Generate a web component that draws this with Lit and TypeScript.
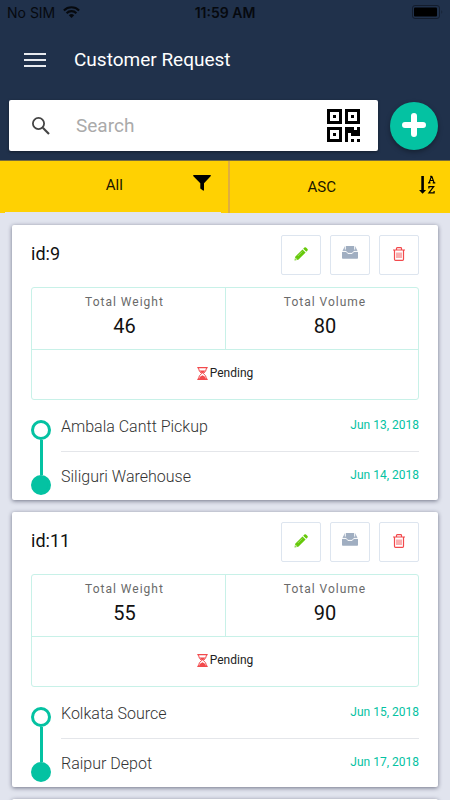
import { LitElement, html, css, svg } from "lit";
import { customElement, property } from "lit/decorators.js";

interface Stop {
  name: string;
  date: string;
}

interface CustomerRequest {
  id: number;
  weight: number;
  volume: number;
  status: string;
  stops: Stop[];
}

const requests: CustomerRequest[] = [
  {
    id: 9,
    weight: 46,
    volume: 80,
    status: "Pending",
    stops: [
      { name: "Ambala Cantt Pickup", date: "Jun 13, 2018" },
      { name: "Siliguri Warehouse", date: "Jun 14, 2018" },
    ],
  },
  {
    id: 11,
    weight: 55,
    volume: 90,
    status: "Pending",
    stops: [
      { name: "Kolkata Source", date: "Jun 15, 2018" },
      { name: "Raipur Depot", date: "Jun 17, 2018" },
    ],
  },
];

const icon = (width: number, height: number, body: unknown) => html`
  <svg width=${width} height=${height} viewBox="0 0 ${width} ${height}" aria-hidden="true">${body}</svg>
`;

const wifi = icon(17, 12, svg`
  <g fill="none" stroke="#000" stroke-width="2.1">
    <path d="M.9 4.4a10.7 10.7 0 0 1 15.2 0" />
    <path d="M3.6 7.2a6.9 6.9 0 0 1 9.8 0" />
  </g>
  <path d="M8.5 12 5.8 9.3a3.8 3.8 0 0 1 5.4 0z" />
`);

const battery = icon(31, 14, svg`
  <rect x=".5" y=".5" width="27" height="13" rx="2.5" fill="none" stroke="#141d2d" />
  <rect x="2" y="2.500" width="23" height="9" rx="1" />
  <path d="M29.500 5q1.500 2 0 4z" fill="#141d2d" />
`);

const menu = icon(22, 14, svg`<path d="M0 1h22M0 7h22M0 13h22" stroke="#e8eaee" stroke-width="2" />`);

const magnifier = icon(18, 18, svg`
  <circle cx="6.500" cy="6.500" r="5.600" fill="none" stroke="#444" stroke-width="1.800" />
  <path d="m10.800 10.800 6.200 6.200" stroke="#444" stroke-width="2.100" />
`);

const qr = icon(33, 33, svg`
  <path fill-rule="evenodd" d="M0 0h15v15H0zM3 3v9h9V3zM18 0h15v15H18zM21 3v9h9V3zM0 18h15v15H0zM3 21v9h9v-9z" />
  <path d="M6 6h3v3H6zM24 6h3v3h-3zM6 24h3v3H6zM18 18h9v3h3v-3h3v9h-9v-3h-3v9h-3zM24 30h3v3h-3zM30 30h3v3h-3z" />
`);

const plus = icon(24, 24, svg`<path d="M12 3v18M3 12h18" stroke="#fff" stroke-width="6" stroke-linecap="round" />`);

const funnel = icon(18, 16, svg`<path d="M.6 0h16.800q.9.400.2 1.200L11 8.200v6.900q-.2.800-1 .5l-2.700-2V8.200L.4 1.200Q-.2.400.6 0z" />`);

const sortAz = icon(17, 20, svg`
  <path d="M2.300 1h2.600v14h2.200L3.600 18.800 0 15h2.300z" />
  <g fill="none" stroke="#000" stroke-width="1.200">
    <path d="M10.200 7.600 12.300 1.500h.6L15 7.600M11 5.500h3.200M9 7.900h2.500M13.700 7.900h2.600M11.200 1.400h1.600" />
    <path d="M9.900 13.500v-1.900h4.800L9.900 17.900h5.200V16" />
  </g>
`);

const pencil = icon(14, 14, svg`
  <path fill="#66c90a" d="M9.200 1.700 10.400.5q.8-.7 1.600 0l1.500 1.500q.7.800 0 1.600l-1.200 1.200zM8.500 2.400l3.100 3.100-7.300 7.300L.5 13.500l.7-3.800z" />
  <path d="m3.800 9 4.500-4.500" fill="none" stroke="#b5e58a" stroke-width=".7" />
  <path d="M1.700 10.800v1.500h1.500" fill="none" stroke="#fff" stroke-width=".7" />
`);

const inbox = icon(16, 13, svg`
  <path fill="#a0aec1" d="M3.500 0h9q.6 0 .8.500L16 6v6q0 .8-.8.800H.8Q0 12.800 0 12V6L2.700.5q.2-.5.800-.5z" />
  <path d="M0 5.400h4.200l1.600 2h4.400l1.600-2H16M3.300 0v3.600M12.700 0v3.600" fill="none" stroke="#fff" stroke-width="1" />
`);

const trash = icon(12, 14, svg`
  <g fill="none" stroke="#f2494c">
    <path d="M0 3h12M3.500 3V1.500q0-.8.800-.8h3.400q.8 0 .8.800V3M1.500 3v9.200q0 1.200 1 1.200h7q1 0 1-1.200V3" stroke-width="1.200" />
    <path d="M4 5.500v5.500M6 5.500v5.500M8 5.500v5.500" stroke-width=".9" />
  </g>
`);

const hourglass = icon(11, 13, svg`
  <path d="M.3.700h10.400M.3 12.300h10.400" stroke="#f2494c" stroke-width="1.300" />
  <path d="M1.500 1q.2 3.800 3.200 5.500Q1.700 8.200 1.500 12M9.500 1q-.2 3.800-3.200 5.500 3 1.700 3.200 5.500" fill="none" stroke="#f2494c" />
  <path d="M2.700 3.500h5.600Q7.500 5.600 5.500 6.500 3.500 5.600 2.700 3.500zM2 12q.4-2.500 3.500-3.800Q8.600 9.500 9 12z" fill="#f2494c" />
`);

@customElement("request-card")
export class RequestCard extends LitElement {
  @property({ attribute: false }) request!: CustomerRequest;

  static styles = css`
    :host {
      display: block;
      padding: 10px 19px 5px;
      background: #fff;
      border-radius: 2px;
      box-shadow: 0 1px 4px rgba(20, 24, 50, 0.55);
    }
    .head {
      display: flex;
      align-items: center;
      justify-content: space-between;
    }
    .title {
      margin: 0;
      padding-bottom: 2px;
      font-size: 18px;
      font-weight: 400;
      line-height: 24px;
      color: #111;
    }
    .actions {
      display: flex;
      gap: 9px;
    }
    .action {
      display: grid;
      place-items: center;
      width: 40px;
      height: 40px;
      padding: 0 1px 2px 0;
      background: #fff;
      border: 1px solid #dde5ef;
      border-radius: 2px;
    }
    .action.raised {
      padding-bottom: 6px;
    }
    .summary {
      margin-top: 12px;
      border: 1px solid #c8f1e8;
      border-radius: 3px;
    }
    .totals {
      display: grid;
      grid-template-columns: 1fr 1fr;
      margin: 0;
      border-bottom: 1px solid #c8f1e8;
    }
    .total {
      padding: 5px 8px 8px 0;
      text-align: center;
    }
    .total + .total {
      padding: 5px 0 8px 6px;
      border-left: 1px solid #c8f1e8;
    }
    .label {
      font-size: 12px;
      line-height: 18px;
      letter-spacing: 1px;
      color: #6a6a6a;
    }
    .value {
      margin: 0;
      font-size: 20px;
      line-height: 30px;
      color: #111;
    }
    .status {
      display: flex;
      align-items: center;
      justify-content: center;
      gap: 2px;
      height: 46px;
      padding-bottom: 3px;
      font-size: 12px;
      color: #222;
    }
    .route {
      display: grid;
      grid-template-columns: 20px 1fr;
      column-gap: 10px;
      margin-top: 20px;
    }
    .track {
      display: flex;
      flex-direction: column;
      align-items: center;
      height: 75px;
    }
    .dot {
      box-sizing: border-box;
      width: 20px;
      height: 20px;
      border: 3px solid #04c2a2;
      border-radius: 50%;
    }
    .dot.filled {
      background: #04c2a2;
    }
    .line {
      flex: 1;
      width: 3px;
      background: #04c2a2;
    }
    .stops {
      margin: 0;
      padding: 0;
      list-style: none;
    }
    .stop {
      display: flex;
      align-items: flex-start;
      justify-content: space-between;
      font-size: 16px;
      font-weight: 300;
      line-height: 14px;
      color: #333;
    }
    .stop + .stop {
      margin-top: 17px;
      padding-top: 18px;
      border-top: 1px solid #e4e6ea;
    }
    .date {
      font-size: 12px;
      font-weight: 400;
      line-height: 10px;
      color: #04c2a2;
    }
    svg {
      display: block;
    }
  `;

  render() {
    const r = this.request;
    return html`
      <div class="head">
        <h2 class="title">id:${r.id}</h2>
        <div class="actions">
          <button class="action" aria-label="Edit">${pencil}</button>
          <button class="action raised" aria-label="Archive">${inbox}</button>
          <button class="action" aria-label="Delete">${trash}</button>
        </div>
      </div>
      <div class="summary">
        <dl class="totals">
          <div class="total">
            <dt class="label">Total Weight</dt>
            <dd class="value">${r.weight}</dd>
          </div>
          <div class="total">
            <dt class="label">Total Volume</dt>
            <dd class="value">${r.volume}</dd>
          </div>
        </dl>
        <div class="status">${hourglass}<span>${r.status}</span></div>
      </div>
      <div class="route">
        <div class="track"><span class="dot"></span><span class="line"></span><span class="dot filled"></span></div>
        <ul class="stops">
          ${r.stops.map((s) => html`<li class="stop"><span>${s.name}</span><time class="date">${s.date}</time></li>`)}
        </ul>
      </div>
    `;
  }
}

@customElement("app-root")
export class AppRoot extends LitElement {
  static styles = css`
    :host {
      display: block;
      height: 100vh;
      overflow: hidden;
      background: #e1e4ee;
      font-family: Roboto, "Liberation Sans", sans-serif;
    }
    button {
      font-family: inherit;
      border: 0;
      background: none;
    }
    svg {
      display: block;
    }
    .top {
      padding-bottom: 9px;
      background: #20314b;
      border-bottom: 1px solid #776c3b;
    }
    .device {
      display: grid;
      grid-template-columns: 1fr auto 1fr;
      align-items: center;
      height: 24px;
      padding: 0 7px;
      font-family: Inter, "Liberation Sans", sans-serif;
      font-size: 14px;
      color: #000;
    }
    .carrier {
      display: flex;
      align-items: center;
      gap: 8px;
      opacity: 0.8;
    }
    .clock {
      font-weight: 600;
      opacity: 0.8;
    }
    .battery {
      justify-self: end;
    }
    .bar {
      display: flex;
      align-items: center;
      gap: 28px;
      height: 72px;
      padding: 0 24px;
    }
    .menu {
      padding: 0;
    }
    .heading {
      margin: 0;
      font-size: 19px;
      font-weight: 400;
      line-height: 24px;
      color: #fff;
    }
    .tools {
      display: flex;
      align-items: center;
      gap: 12px;
      padding: 4px 12px 0 9px;
    }
    .search {
      flex: 1;
      display: flex;
      align-items: center;
      min-width: 0;
      height: 51px;
      padding: 0 18px 0 23px;
      box-sizing: border-box;
      background: #fff;
      border-radius: 2px;
      box-shadow: 0 1px 3px rgba(0, 0, 0, 0.4);
    }
    .field {
      flex: 1;
      min-width: 0;
      padding: 0 26px;
      border: 0;
      outline: 0;
      background: none;
      font-family: inherit;
      font-size: 19px;
      color: #333;
    }
    .field::placeholder {
      color: #aaa;
      opacity: 1;
    }
    .scan {
      padding: 0;
    }
    .add {
      display: grid;
      place-items: center;
      width: 48px;
      height: 48px;
      padding: 0 0 2px;
      border-radius: 50%;
      background: #04c2a2;
      box-shadow: 0 2px 5px rgba(0, 0, 0, 0.35);
    }
    .filters {
      display: grid;
      grid-template-columns: 51% 1fr;
      height: 52px;
      background: #ffd102;
    }
    .filter {
      position: relative;
      display: grid;
      grid-template-columns: 1fr auto;
      align-items: center;
      padding: 0 14px 0 0;
      font-size: 15px;
      color: #1a1600;
    }
    .filter:first-child {
      padding: 0 17px 4px 41px;
      border-right: 2px solid #dfae3f;
    }
    .filter:first-child::after {
      content: "";
      position: absolute;
      left: 5px;
      right: 7px;
      bottom: 0;
      height: 1px;
      background: #e1e4ee;
    }
    .filter .mark {
      padding: 0 0 4px 5px;
    }
    .list {
      display: grid;
      gap: 12px;
      padding: 12px;
    }
    .next {
      height: 275px;
      background: #fff;
      border-radius: 2px;
      box-shadow: 0 1px 4px rgba(20, 24, 50, 0.55);
    }
  `;

  render() {
    return html`
      <header class="top">
        <div class="device">
          <span class="carrier">No SIM ${wifi}</span>
          <span class="clock">11:59 AM</span>
          <span class="battery">${battery}</span>
        </div>
        <div class="bar">
          <button class="menu" aria-label="Menu">${menu}</button>
          <h1 class="heading">Customer Request</h1>
        </div>
        <div class="tools">
          <div class="search">
            ${magnifier}
            <input class="field" type="text" placeholder="Search" aria-label="Search" />
            <button class="scan" aria-label="Scan code">${qr}</button>
          </div>
          <button class="add" aria-label="Add request">${plus}</button>
        </div>
      </header>
      <nav class="filters">
        <button class="filter"><span>All</span><span class="mark">${funnel}</span></button>
        <button class="filter"><span>ASC</span><span class="mark">${sortAz}</span></button>
      </nav>
      <main class="list">
        ${requests.map((r) => html`<request-card .request=${r}></request-card>`)}
        <div class="next"></div>
      </main>
    `;
  }
}
